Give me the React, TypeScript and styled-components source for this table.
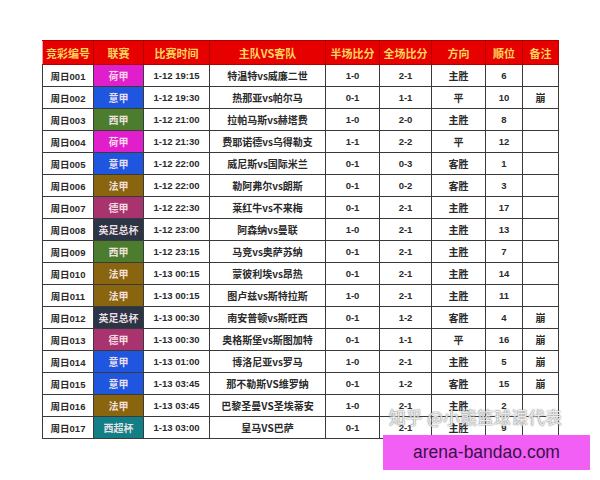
import React from "react";
import styled, { createGlobalStyle } from "styled-components";

const GlobalStyle = createGlobalStyle`
  html, body {
    margin: 0;
    padding: 0;
    background: #ffffff;
  }
  body {
    font-family: "Liberation Sans", "Noto Sans CJK SC", sans-serif;
  }
`;

const Page = styled.div`
  position: relative;
  width: 600px;
  height: 480px;
  padding: 40px 0 0 42px;
  box-sizing: border-box;
`;

const Table = styled.table`
  border-collapse: collapse;
  table-layout: fixed;
  width: 516px;
`;

const HeadCell = styled.th`
  height: 23px;
  padding: 0;
  background: #e60000;
  color: #ffd45c;
  font-family: "Noto Sans CJK SC", sans-serif;
  font-size: 11px;
  font-weight: 700;
  text-align: center;
  border: 1px solid #b00000;
  border-left-color: #f4a0a0;
`;

const Cell = styled.td<{ $bg?: string; $cjk?: boolean }>`
  height: 21px;
  padding: 0;
  text-align: center;
  white-space: nowrap;
  overflow: hidden;
  font-family: ${(p) =>
    p.$cjk
      ? '"Noto Sans CJK SC", sans-serif'
      : '"Liberation Sans", "Noto Sans CJK SC", sans-serif'};
  font-size: ${(p) => (p.$cjk ? "10px" : "9.5px")};
  font-weight: 700;
  color: ${(p) => (p.$bg ? "rgba(255, 236, 240, 0.92)" : "#2a2a2a")};
  background: ${(p) => p.$bg || "#ffffff"};
  border: 1px solid #3a3a3a;
`;

const Watermark = styled.div`
  position: absolute;
  left: 389px;
  top: 405px;
  font-family: "Noto Sans CJK SC", sans-serif;
  font-size: 16.5px;
  color: rgba(255, 255, 255, 0.85);
  text-shadow: 0 0 1px #777, 0 0 2px #999;
  letter-spacing: 0.5px;
  white-space: nowrap;
`;

const Banner = styled.div`
  position: absolute;
  left: 383px;
  top: 435px;
  width: 207px;
  height: 35px;
  background: #f25ff5;
  display: flex;
  align-items: center;
  justify-content: center;
  font-family: "Liberation Sans", sans-serif;
  font-size: 17.5px;
  color: #3c0f4a;
`;

const leagueColors: Record<string, string> = {
  荷甲: "#e01ecb",
  意甲: "#1f56e0",
  西甲: "#4c7d2f",
  法甲: "#8a650f",
  德甲: "#a8336f",
  英足总杯: "#2b3546",
  西超杯: "#117f85",
};

const headers = ["竞彩编号", "联赛", "比赛时间", "主队VS客队", "半场比分", "全场比分", "方向", "顺位", "备注"];
const widths = [51, 50, 66, 116, 54, 52, 54, 37, 36];

const rows: string[][] = [
  ["周日001", "荷甲", "1-12 19:15", "特温特vs威廉二世", "1-0", "2-1", "主胜", "6", ""],
  ["周日002", "意甲", "1-12 19:30", "热那亚vs帕尔马", "0-1", "1-1", "平", "10", "崩"],
  ["周日003", "西甲", "1-12 21:00", "拉帕马斯vs赫塔费", "1-0", "2-0", "主胜", "8", ""],
  ["周日004", "荷甲", "1-12 21:30", "费耶诺德vs乌得勒支", "1-1", "2-2", "平", "12", ""],
  ["周日005", "意甲", "1-12 22:00", "威尼斯vs国际米兰", "0-1", "0-3", "客胜", "1", ""],
  ["周日006", "法甲", "1-12 22:00", "勒阿弗尔vs朗斯", "0-1", "0-2", "客胜", "3", ""],
  ["周日007", "德甲", "1-12 22:30", "莱红牛vs不来梅", "0-1", "2-1", "主胜", "17", ""],
  ["周日008", "英足总杯", "1-12 23:00", "阿森纳vs曼联", "1-0", "2-1", "主胜", "13", ""],
  ["周日009", "西甲", "1-12 23:15", "马竞vs奥萨苏纳", "0-1", "2-1", "主胜", "7", ""],
  ["周日010", "法甲", "1-13 00:15", "蒙彼利埃vs昂热", "0-1", "2-1", "主胜", "14", ""],
  ["周日011", "法甲", "1-13 00:15", "图卢兹vs斯特拉斯", "1-0", "2-1", "主胜", "11", ""],
  ["周日012", "英足总杯", "1-13 00:30", "南安普顿vs斯旺西", "0-1", "1-2", "客胜", "4", "崩"],
  ["周日013", "德甲", "1-13 00:30", "奥格斯堡vs斯图加特", "0-1", "1-1", "平", "16", "崩"],
  ["周日014", "意甲", "1-13 01:00", "博洛尼亚vs罗马", "1-0", "2-1", "主胜", "5", "崩"],
  ["周日015", "意甲", "1-13 03:45", "那不勒斯VS维罗纳", "0-1", "1-2", "客胜", "15", "崩"],
  ["周日016", "法甲", "1-13 03:45", "巴黎圣曼VS圣埃蒂安", "1-0", "2-1", "主胜", "2", ""],
  ["周日017", "西超杯", "1-13 03:00", "皇马VS巴萨", "0-1", "2-1", "主胜", "9", ""],
];

const cjkCols = new Set([1, 3, 6, 8]);

export default function App() {
  return (
    <>
      <GlobalStyle />
      <Page>
        <Table>
          <colgroup>
            {widths.map((w, i) => (
              <col key={i} style={{ width: w }} />
            ))}
          </colgroup>
          <thead>
            <tr>
              {headers.map((h) => (
                <HeadCell key={h}>{h}</HeadCell>
              ))}
            </tr>
          </thead>
          <tbody>
            {rows.map((r) => (
              <tr key={r[0]}>
                {r.map((v, i) => (
                  <Cell
                    key={i}
                    $cjk={cjkCols.has(i)}
                    $bg={i === 1 ? leagueColors[v] : undefined}
                  >
                    {v}
                  </Cell>
                ))}
              </tr>
            ))}
          </tbody>
        </Table>
        <Watermark>知乎 @小熊篮球课代表</Watermark>
        <Banner>arena-bandao.com</Banner>
      </Page>
    </>
  );
}
